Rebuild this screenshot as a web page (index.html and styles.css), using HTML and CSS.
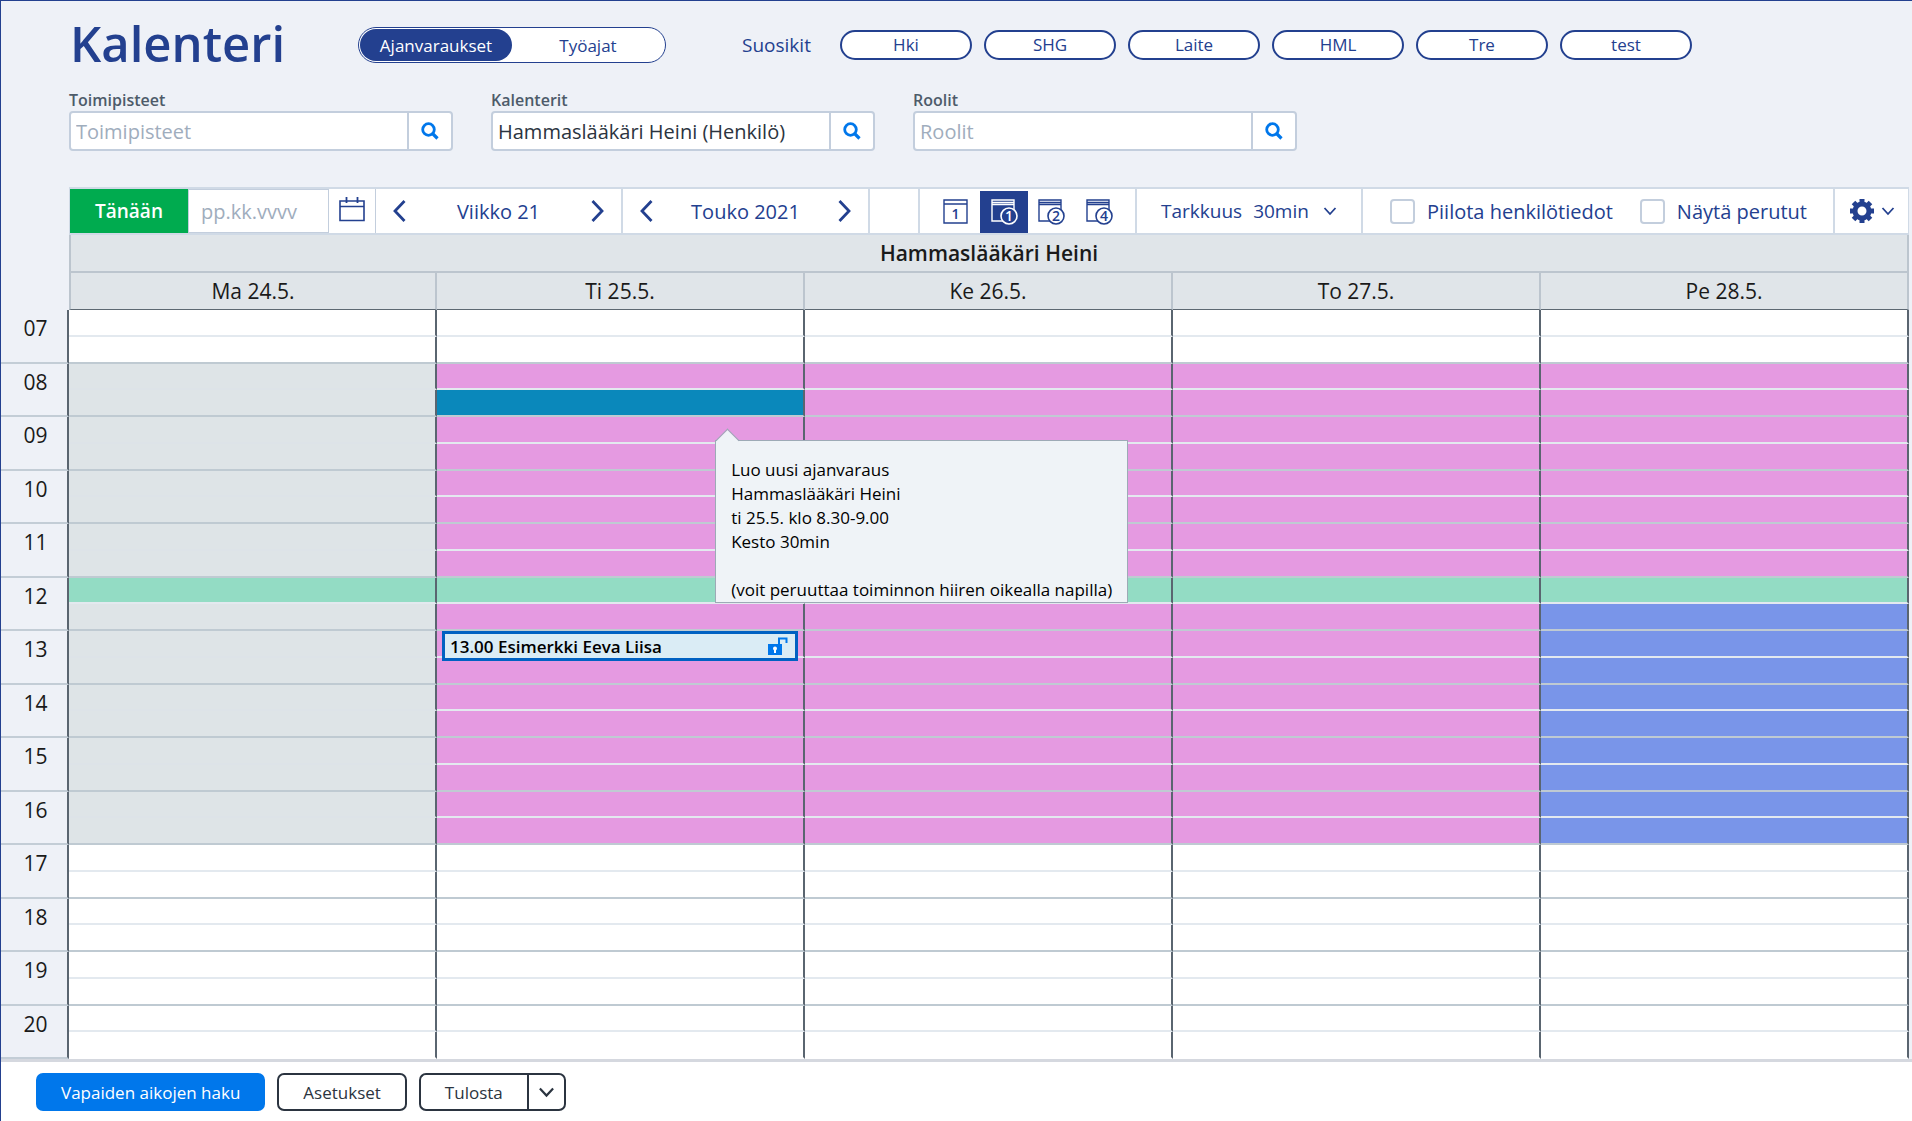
FILE: index.html
```html
<!DOCTYPE html>
<html lang="fi">
<head>
    <meta charset="UTF-8">
    <meta name="viewport" content="width=device-width, initial-scale=1.0">
    <title>Kalenteri</title>
    <link rel="stylesheet" href="styles.css">
</head>
<body>
    <svg class="defs" aria-hidden="true">
        <symbol id="search" viewBox="0 0 18 18"><circle cx="7.5" cy="7.5" r="5.8" fill="none" stroke="currentColor" stroke-width="2.8"/><path d="M11.5 11.5l5 5" stroke="currentColor" stroke-width="3.2"/></symbol>
        <symbol id="left" viewBox="0 0 14 24"><path d="M12.5 2L3 12l9.500 10" fill="none" stroke="currentColor" stroke-width="2.800"/></symbol>
        <symbol id="right" viewBox="0 0 14 24"><path d="M1.500 2L11 12l-9.500 10" fill="none" stroke="currentColor" stroke-width="2.800"/></symbol>
        <symbol id="down" viewBox="0 0 14 10"><path d="M1.500 2L7 8l5.500-6" fill="none" stroke="currentColor" stroke-width="1.800"/></symbol>
    </svg>

    <header class="top">
        <h1>Kalenteri</h1>
        <div class="toggle">
            <button class="active">Ajanvaraukset</button>
            <button>Työajat</button>
        </div>
        <span class="fav-title">Suosikit</span>
        <div class="favorites">
            <button>Hki</button>
            <button>SHG</button>
            <button>Laite</button>
            <button>HML</button>
            <button>Tre</button>
            <button>test</button>
        </div>
    </header>

    <form class="filters">
        <div class="field">
            <label for="offices">Toimipisteet</label>
            <div class="search-box">
                <input type="text" id="offices" placeholder="Toimipisteet">
                <button type="button" aria-label="Hae toimipisteet"><svg><use href="#search"/></svg></button>
            </div>
        </div>
        <div class="field">
            <label for="calendars">Kalenterit</label>
            <div class="search-box">
                <input type="text" id="calendars" value="Hammaslääkäri Heini (Henkilö)">
                <button type="button" aria-label="Hae kalenterit"><svg><use href="#search"/></svg></button>
            </div>
        </div>
        <div class="field">
            <label for="roles">Roolit</label>
            <div class="search-box">
                <input type="text" id="roles" placeholder="Roolit">
                <button type="button" aria-label="Hae roolit"><svg><use href="#search"/></svg></button>
            </div>
        </div>
    </form>

    <div class="toolbar">
        <button class="today">Tänään</button>
        <input class="date" type="text" placeholder="pp.kk.vvvv" aria-label="Päivämäärä">
        <button class="date-btn" aria-label="Valitse päivä">
            <svg viewBox="0 0 26 26" fill="none" stroke="currentColor"><path d="M1 5h24v19.500H1zM1 10.500h24" stroke-width="1.600"/><path d="M7.500 1v6M18.500 1v6" stroke-width="1.800"/></svg>
        </button>
        <div class="stepper">
            <button aria-label="Edellinen viikko"><svg><use href="#left"/></svg></button>
            <span>Viikko 21</span>
            <button aria-label="Seuraava viikko"><svg><use href="#right"/></svg></button>
        </div>
        <div class="stepper">
            <button aria-label="Edellinen kuukausi"><svg><use href="#left"/></svg></button>
            <span>Touko 2021</span>
            <button aria-label="Seuraava kuukausi"><svg><use href="#right"/></svg></button>
        </div>
        <div class="spacer"></div>
        <div class="views">
            <button aria-label="Päivä">
                <svg viewBox="0 0 28 28"><path d="M2 2h23v23H2zM2 6h23" class="line"/><text x="13.500" y="21">1</text></svg>
            </button>
            <button class="active" aria-label="1 viikko">
                <svg viewBox="0 0 28 28"><path d="M2 2h22v21H2zM2 4.500h22M2 6.500h22" class="line"/><circle cx="19" cy="18" r="8"/><text x="19" y="23">1</text></svg>
            </button>
            <button aria-label="2 viikkoa">
                <svg viewBox="0 0 28 28"><path d="M2 2h22v21H2zM2 4.500h22M2 6.500h22" class="line"/><circle cx="19" cy="18" r="8"/><text x="19" y="23">2</text></svg>
            </button>
            <button aria-label="4 viikkoa">
                <svg viewBox="0 0 28 28"><path d="M2 2h22v21H2zM2 4.500h22M2 6.500h22" class="line"/><circle cx="19" cy="18" r="8"/><text x="19" y="23">4</text></svg>
            </button>
        </div>
        <div class="accuracy">
            <label for="accuracy">Tarkkuus</label>
            <select id="accuracy"><option>30min</option></select>
            <svg><use href="#down"/></svg>
        </div>
        <div class="checks">
            <label><input type="checkbox">Piilota henkilötiedot</label>
            <label><input type="checkbox">Näytä perutut</label>
        </div>
        <button class="settings" aria-label="Asetusvalikko">
            <svg class="gear" viewBox="0 0 24 24"><circle cx="12" cy="12" r="7" fill="none" stroke="currentColor" stroke-width="5"/><path d="M12 0v4M12 20v4M0 12h4M20 12h4M3.500 3.500l3 3M17.500 17.500l3 3M3.500 20.500l3-3M17.500 6.500l3-3" stroke="currentColor" stroke-width="5"/></svg>
            <svg class="arrow"><use href="#down"/></svg>
        </button>
    </div>

    <main>
        <table class="calendar">
            <thead>
                <tr class="owner"><td></td><th colspan="5">Hammaslääkäri Heini</th></tr>
                <tr class="days"><td></td><th>Ma 24.5.</th><th>Ti 25.5.</th><th>Ke 26.5.</th><th>To 27.5.</th><th>Pe 28.5.</th></tr>
            </thead>
            <tbody>
                <tr><th rowspan="2">07</th><td></td><td></td><td></td><td></td><td></td></tr>
                <tr class="hour"><td></td><td></td><td></td><td></td><td></td></tr>
                <tr><th rowspan="2">08</th><td class="closed"></td><td class="open"></td><td class="open"></td><td class="open"></td><td class="open"></td></tr>
                <tr class="hour"><td class="closed"></td><td class="selected"></td><td class="open"></td><td class="open"></td><td class="open"></td></tr>
                <tr>
                    <th rowspan="2">09</th><td class="closed"></td>
                    <td class="open">
                        <div class="tooltip" role="tooltip">
                            Luo uusi ajanvaraus<br>
                            Hammaslääkäri Heini<br>
                            ti 25.5. klo 8.30-9.00<br>
                            Kesto 30min<br>
                            <br>
                            (voit peruuttaa toiminnon hiiren oikealla napilla)
                        </div>
                    </td>
                    <td class="open"></td><td class="open"></td><td class="open"></td>
                </tr>
                <tr class="hour"><td class="closed"></td><td class="open"></td><td class="open"></td><td class="open"></td><td class="open"></td></tr>
                <tr><th rowspan="2">10</th><td class="closed"></td><td class="open"></td><td class="open"></td><td class="open"></td><td class="open"></td></tr>
                <tr class="hour"><td class="closed"></td><td class="open"></td><td class="open"></td><td class="open"></td><td class="open"></td></tr>
                <tr><th rowspan="2">11</th><td class="closed"></td><td class="open"></td><td class="open"></td><td class="open"></td><td class="open"></td></tr>
                <tr class="hour"><td class="closed"></td><td class="open"></td><td class="open"></td><td class="open"></td><td class="open"></td></tr>
                <tr><th rowspan="2">12</th><td class="lunch"></td><td class="lunch"></td><td class="lunch"></td><td class="lunch"></td><td class="lunch"></td></tr>
                <tr class="hour"><td class="closed"></td><td class="open"></td><td class="open"></td><td class="open"></td><td class="remote"></td></tr>
                <tr>
                    <th rowspan="2">13</th><td class="closed"></td>
                    <td class="open">
                        <div class="event">
                            <span>13.00 Esimerkki Eeva Liisa</span>
                            <svg viewBox="0 0 20 18"><path d="M0 7h14v11H0z" fill="#0077eb"/><path d="M11 8V1.500h7.500V6" fill="none" stroke="#0077eb" stroke-width="2"/><circle cx="7" cy="11.500" r="2" fill="#fff"/><path d="M6 12h2v4H6z" fill="#fff"/></svg>
                        </div>
                    </td>
                    <td class="open"></td><td class="open"></td><td class="remote"></td>
                </tr>
                <tr class="hour"><td class="closed"></td><td class="open"></td><td class="open"></td><td class="open"></td><td class="remote"></td></tr>
                <tr><th rowspan="2">14</th><td class="closed"></td><td class="open"></td><td class="open"></td><td class="open"></td><td class="remote"></td></tr>
                <tr class="hour"><td class="closed"></td><td class="open"></td><td class="open"></td><td class="open"></td><td class="remote"></td></tr>
                <tr><th rowspan="2">15</th><td class="closed"></td><td class="open"></td><td class="open"></td><td class="open"></td><td class="remote"></td></tr>
                <tr class="hour"><td class="closed"></td><td class="open"></td><td class="open"></td><td class="open"></td><td class="remote"></td></tr>
                <tr><th rowspan="2">16</th><td class="closed"></td><td class="open"></td><td class="open"></td><td class="open"></td><td class="remote"></td></tr>
                <tr class="hour"><td class="closed"></td><td class="open"></td><td class="open"></td><td class="open"></td><td class="remote"></td></tr>
                <tr><th rowspan="2">17</th><td></td><td></td><td></td><td></td><td></td></tr>
                <tr class="hour"><td></td><td></td><td></td><td></td><td></td></tr>
                <tr><th rowspan="2">18</th><td></td><td></td><td></td><td></td><td></td></tr>
                <tr class="hour"><td></td><td></td><td></td><td></td><td></td></tr>
                <tr><th rowspan="2">19</th><td></td><td></td><td></td><td></td><td></td></tr>
                <tr class="hour"><td></td><td></td><td></td><td></td><td></td></tr>
                <tr><th rowspan="2">20</th><td></td><td></td><td></td><td></td><td></td></tr>
                <tr class="hour"><td></td><td></td><td></td><td></td><td></td></tr>
            </tbody>
        </table>
    </main>

    <footer>
        <button class="primary">Vapaiden aikojen haku</button>
        <button>Asetukset</button>
        <div class="split">
            <button>Tulosta</button>
            <button aria-label="Tulostusvaihtoehdot"><svg><use href="#down"/></svg></button>
        </div>
    </footer>
</body>
</html>
```
FILE: styles.css
```css
* {
    box-sizing: border-box;
}
body {
    margin: 0;
    height: 100vh;
    display: flex;
    flex-direction: column;
    background: #eef1f7;
    border-top: 1px solid #23408f;
    border-left: 1px solid #23408f;
    font-family: "Open Sans", "Noto Sans", sans-serif;
    font-size: 20px;
    color: #23408f;
}
button, input, select {
    font: inherit;
    color: inherit;
    margin: 0;
    padding: 0;
    border: none;
    background: none;
}
button {
    cursor: pointer;
}
svg {
    display: block;
}
.defs {
    position: absolute;
    width: 0;
    height: 0;
}

/* top row */
.top {
    display: flex;
    align-items: center;
    height: 88px;
    padding-left: 69px;
}
h1 {
    margin: 0;
    width: 288px;
    font-size: 49px;
    font-weight: 600;
    line-height: 84px;
    height: 88px;
}
.toggle {
    display: flex;
    width: 308px;
    height: 36px;
    padding: 1px;
    border: 1px solid #23408f;
    border-radius: 18px;
    background: #fff;
    font-size: 17px;
}
.toggle button {
    flex: 1;
    border-radius: 16px;
}
.toggle .active {
    background: #23408f;
    color: #fff;
}
.fav-title {
    width: 98px;
    margin-left: 76px;
    font-size: 19px;
}
.favorites {
    display: flex;
    gap: 12px;
    font-size: 17px;
}
.favorites button {
    width: 132px;
    height: 30px;
    border: 2px solid #23408f;
    border-radius: 15px;
    background: #fff;
    line-height: 22px;
}

/* filters */
.filters {
    display: flex;
    gap: 38px;
    height: 98px;
    padding-left: 68px;
}
.field {
    width: 384px;
}
.field label {
    display: block;
    font-size: 16px;
    font-weight: 600;
    line-height: 22px;
    color: #4d5b6a;
}
.search-box {
    display: flex;
    height: 40px;
    border: 2px solid #c3cedd;
    border-radius: 4px;
    background: #fff;
}
.search-box input {
    flex: 1;
    min-width: 0;
    padding-left: 5px;
    color: #2b3440;
}
.search-box button {
    width: 44px;
    border-left: 2px solid #c3cedd;
    color: #0077eb;
}
.search-box svg {
    width: 18px;
    height: 18px;
    margin: 0 auto;
}
::placeholder {
    color: #9fadbd;
    opacity: 1;
}

/* toolbar */
.toolbar {
    display: flex;
    height: 48px;
    margin: 0 3px 0 68px;
    border: 2px solid #d0dae6;
    border-width: 2px 1px 2px 1px;
    background: #fff;
}
.today {
    width: 118px;
    background: #00ab4f;
    color: #fff;
    font-size: 19px;
    font-weight: 600;
}
.date {
    width: 141px;
    padding-left: 12px;
    border: 1px solid #c3cedd;
}
.date-btn {
    width: 47px;
    border-right: 1px solid #c3cedd;
}
.date-btn svg {
    width: 26px;
    height: 26px;
    margin: 0 auto 4px;
}
.stepper {
    display: flex;
    align-items: center;
    justify-content: space-between;
    width: 247px;
    padding: 0 16px;
    border-right: 2px solid #d0dae6;
}
.stepper svg {
    width: 14px;
    height: 24px;
}
.spacer {
    flex: 1;
}
.views {
    display: flex;
    width: 219px;
    padding: 2px 12px 0;
    border: 2px solid #d0dae6;
    border-width: 0 2px;
}
.views button {
    width: 48px;
}
.views .active {
    background: #23408f;
    color: #fff;
}
.views svg {
    width: 28px;
    height: 28px;
    margin: 0 auto;
}
.views .line {
    fill: none;
    stroke: currentColor;
    stroke-width: 1.400;
}
.views circle {
    fill: #fff;
    stroke: currentColor;
    stroke-width: 1.600;
}
.views .active circle {
    fill: #23408f;
}
.views text {
    fill: currentColor;
    font-size: 14px;
    font-weight: 600;
    text-anchor: middle;
}
.accuracy {
    display: flex;
    align-items: center;
    width: 226px;
    padding-left: 24px;
    border-right: 2px solid #d0dae6;
    font-size: 19px;
}
.accuracy select {
    appearance: none;
    margin: 0 14px 0 11px;
}
.accuracy svg, .arrow {
    width: 14px;
    height: 10px;
}
.checks {
    display: flex;
    align-items: center;
    gap: 27px;
    width: 472px;
    padding-left: 27px;
    border-right: 2px solid #d0dae6;
}
.checks label {
    display: flex;
    align-items: center;
    white-space: nowrap;
}
.checks input {
    appearance: none;
    width: 25px;
    height: 25px;
    margin-right: 12px;
    border: 2px solid #c3cedd;
    border-radius: 4px;
    background: #fff;
}
.settings {
    display: flex;
    align-items: center;
    gap: 7px;
    width: 73px;
    padding-left: 15px;
}
.gear {
    width: 24px;
    height: 24px;
}

/* calendar */
main {
    flex: 1;
    min-height: 0;
    margin-right: 3px;
}
.calendar {
    width: 100%;
    height: 100%;
    table-layout: fixed;
    border-spacing: 0;
    color: #1a1a1a;
    font-size: 21px;
}
.calendar td, .calendar th {
    padding: 0;
}
.calendar tr > :first-child:not([class]) {
    width: 68px;
}
.owner th, .days th {
    background: #e0e5e9;
    border-right: 2px solid #bcc5ce;
    line-height: 28px;
}
.owner th {
    height: 38px;
    border-left: 2px solid #bcc5ce;
    border-bottom: 2px solid #bcc5ce;
    font-weight: 600;
}
.days th {
    height: 37px;
    border-bottom: 1px solid #5d6872;
    font-weight: 400;
}
.days th:nth-child(2) {
    border-left: 2px solid #bcc5ce;
}
tbody th {
    vertical-align: top;
    border-right: 2px solid #5a6570;
    border-bottom: 2px solid #c3cdd6;
    font-weight: 400;
    line-height: 37px;
}
.calendar tbody th {
    padding-left: 3px;
}
tbody td {
    position: relative;
    border-right: 2px solid #5a6570;
    border-bottom: 2px solid #e3e9ef;
    background: #fff;
    background-clip: padding-box;
}
tbody .hour td {
    border-bottom-color: #bfcad2;
}
tbody .hour:last-child td {
    border-bottom-color: #fff;
}
tbody .closed {
    background-color: #dee4e7;
    border-bottom-color: #dde3e8;
}
tbody .open {
    background-color: #e59ae1;
}
tbody .selected {
    background-color: #0a88bb;
}
tbody .lunch {
    background-color: #93dcc4;
}
tbody .remote {
    background-color: #7995e9;
}
.event {
    position: absolute;
    z-index: 1;
    top: 0;
    left: 5px;
    right: 5px;
    height: 30px;
    display: flex;
    align-items: center;
    justify-content: space-between;
    padding: 0 7px 0 5px;
    border: 3px solid #0061c2;
    background: #daecf5;
    color: #000;
    font-size: 17px;
    font-weight: 600;
}
.event svg {
    width: 20px;
    height: 18px;
}
.tooltip {
    position: absolute;
    z-index: 2;
    top: 23px;
    left: 76%;
    padding: 17px 15px 0;
    border: 1px solid #9daab6;
    background: #eff3f7;
    color: #000;
    font-size: 17px;
    line-height: 24px;
    white-space: nowrap;
}
.tooltip::before {
    content: "";
    position: absolute;
    top: -9px;
    left: 3px;
    width: 16px;
    height: 16px;
    border: 1px solid #9daab6;
    border-width: 1px 0 0 1px;
    background: linear-gradient(135deg, #eff3f7 50%, transparent 50%);
    transform: rotate(45deg);
}

/* bottom bar */
footer {
    display: flex;
    gap: 12px;
    height: 62px;
    padding: 11px 35px;
    border-top: 3px solid #d5d8df;
    background: #fff;
    color: #2b3440;
    font-size: 17px;
}
footer button {
    height: 38px;
    padding: 0 24px;
    border: 2px solid #2b3440;
    border-radius: 7px;
    background: #fff;
}
footer .primary {
    padding: 0 23px;
    border-color: #0077eb;
    background: #0077eb;
    color: #fff;
}
.split {
    display: flex;
}
.split button:first-child {
    border-right: none;
    border-radius: 7px 0 0 7px;
}
.split button:last-child {
    padding: 0 9px;
    border-radius: 0 7px 7px 0;
}
.split svg {
    width: 17px;
    height: 12px;
}
```
